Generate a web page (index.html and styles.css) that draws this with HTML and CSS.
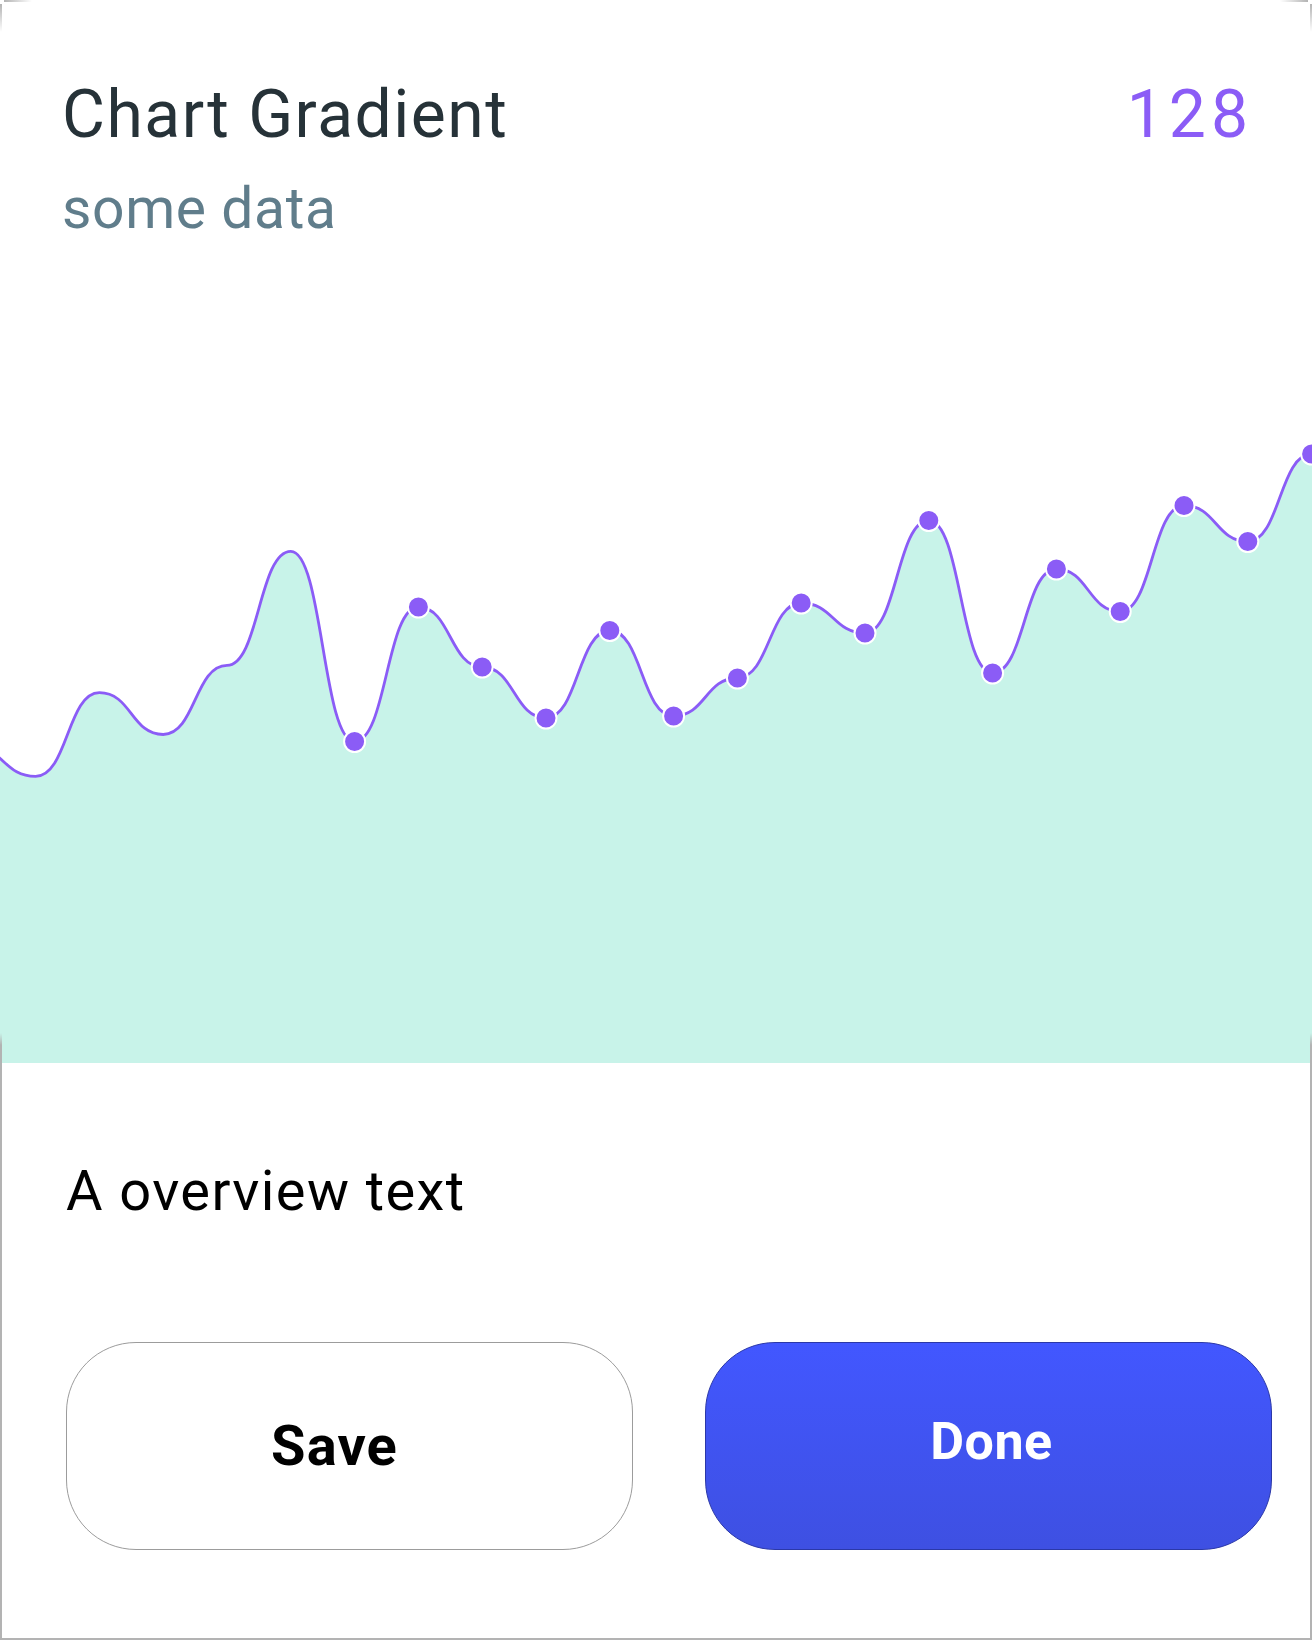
FILE: index.html
```html
<!DOCTYPE html>
<html lang="en">
<head>
<meta charset="utf-8">
<title>Chart Gradient</title>
<link rel="stylesheet" href="styles.css">
</head>
<body>
<div class="card">
  <div class="header">
    <div class="title">Chart Gradient</div>
    <div class="value">128</div>
  </div>
  <div class="subtitle">some data</div>
  <svg class="chart" viewBox="0 0 1312 820" width="1312" height="820" preserveAspectRatio="none">
    <path class="area" d="M-28.2,504 C3.7,504 3.7,533.4 35.6,533.4 C67.5,533.4 67.5,449.7 99.4,449.7 C131.3,449.7 131.3,491.5 163.2,491.5 C195.1,491.5 195.1,422.4 227,422.4 C258.9,422.4 258.9,308.4 290.8,308.4 C322.7,308.4 322.7,498.5 354.6,498.5 C386.5,498.5 386.5,364 418.4,364 C450.3,364 450.3,424 482.2,424 C514.1,424 514.1,475 546,475 C577.9,475 577.9,387.5 609.8,387.5 C641.7,387.5 641.7,473 673.6,473 C705.5,473 705.5,435 737.4,435 C769.3,435 769.3,360 801.2,360 C833.1,360 833.1,390 865,390 C896.9,390 896.9,277.5 928.8,277.5 C960.7,277.5 960.7,430 992.6,430 C1024.5,430 1024.5,326 1056.4,326 C1088.3,326 1088.3,368.5 1120.2,368.5 C1152.1,368.5 1152.1,262.5 1184,262.5 C1215.9,262.5 1215.9,298.5 1247.8,298.5 C1279.7,298.5 1279.7,211 1311.6,211 L1330,211 L1330,820 L-30,820 Z"/>
    <path class="line" d="M-28.2,504 C3.7,504 3.7,533.4 35.6,533.4 C67.5,533.4 67.5,449.7 99.4,449.7 C131.3,449.7 131.3,491.5 163.2,491.5 C195.1,491.5 195.1,422.4 227,422.4 C258.9,422.4 258.9,308.4 290.8,308.4 C322.7,308.4 322.7,498.5 354.6,498.5 C386.5,498.5 386.5,364 418.4,364 C450.3,364 450.3,424 482.2,424 C514.1,424 514.1,475 546,475 C577.9,475 577.9,387.5 609.8,387.5 C641.7,387.5 641.7,473 673.6,473 C705.5,473 705.5,435 737.4,435 C769.3,435 769.3,360 801.2,360 C833.1,360 833.1,390 865,390 C896.9,390 896.9,277.5 928.8,277.5 C960.7,277.5 960.7,430 992.6,430 C1024.5,430 1024.5,326 1056.4,326 C1088.3,326 1088.3,368.5 1120.2,368.5 C1152.1,368.5 1152.1,262.5 1184,262.5 C1215.9,262.5 1215.9,298.5 1247.8,298.5 C1279.7,298.5 1279.7,211 1311.6,211"/>
    <g class="dots">
      <circle cx="354.6" cy="498.5" r="10.5"/>
      <circle cx="418.4" cy="364" r="10.5"/>
      <circle cx="482.2" cy="424" r="10.5"/>
      <circle cx="546" cy="475" r="10.5"/>
      <circle cx="609.8" cy="387.5" r="10.5"/>
      <circle cx="673.6" cy="473" r="10.5"/>
      <circle cx="737.4" cy="435" r="10.5"/>
      <circle cx="801.2" cy="360" r="10.5"/>
      <circle cx="865" cy="390" r="10.5"/>
      <circle cx="928.8" cy="277.5" r="10.5"/>
      <circle cx="992.6" cy="430" r="10.5"/>
      <circle cx="1056.4" cy="326" r="10.5"/>
      <circle cx="1120.2" cy="368.5" r="10.5"/>
      <circle cx="1184" cy="262.5" r="10.5"/>
      <circle cx="1247.8" cy="298.5" r="10.5"/>
      <circle cx="1311.6" cy="211" r="10.5"/>
    </g>
  </svg>
  <div class="overview">A overview text</div>
  <div class="actions">
    <button class="btn btn-save" type="button">Save</button>
    <button class="btn btn-done" type="button">Done</button>
  </div>
</div>
</body>
</html>
```

FILE: styles.css
```css
* {
  box-sizing: border-box;
}

html,
body {
  margin: 0;
  padding: 0;
  background: #ffffff;
}

.card {
  position: relative;
  width: 1312px;
  height: 1640px;
  overflow: hidden;
  background: #ffffff;
  font-family: Roboto, "Liberation Sans", sans-serif;
}

.card::after {
  content: "";
  position: absolute;
  inset: 0;
  pointer-events: none;
  background:
    linear-gradient(to right, #b3b3b3, rgba(179, 179, 179, 0)) 4px 0 / 28px 2px no-repeat,
    linear-gradient(to bottom, #b3b3b3, rgba(179, 179, 179, 0)) 0 4px / 2px 28px no-repeat,
    linear-gradient(to left, #b3b3b3, rgba(179, 179, 179, 0)) right 4px top 0 / 28px 2px no-repeat,
    linear-gradient(to bottom, #b3b3b3, rgba(179, 179, 179, 0)) right 0 top 4px / 2px 28px no-repeat,
    linear-gradient(to bottom, rgba(179, 179, 179, 0), #b3b3b3 12px) 0 1033px / 2px 607px no-repeat,
    linear-gradient(to bottom, rgba(179, 179, 179, 0), #b3b3b3 12px) right 0 top 1033px / 2px 607px no-repeat,
    linear-gradient(#b3b3b3, #b3b3b3) 0 100% / 100% 2px no-repeat;
}

.header {
  display: flex;
  justify-content: space-between;
  align-items: baseline;
  padding: 75px 59px 0 62px;
}

.title {
  font-size: 66px;
  line-height: 80px;
  font-weight: 400;
  letter-spacing: 1.5px;
  color: #263238;
}

.value {
  font-size: 66px;
  line-height: 80px;
  font-weight: 400;
  letter-spacing: 5px;
  color: #8b5cf6;
}

.subtitle {
  margin-top: 20px;
  padding-left: 62px;
  font-size: 57px;
  line-height: 68px;
  letter-spacing: 0.6px;
  color: #607d8b;
}

.chart {
  display: block;
  width: 1312px;
  height: 820px;
  overflow: visible;
}

.area {
  fill: #c8f3e9;
  stroke: none;
}

.line {
  fill: none;
  stroke: #8b5cf6;
  stroke-width: 2.8;
}

.dots circle {
  fill: #8b5cf6;
  stroke: #ffffff;
  stroke-width: 2;
}

.overview {
  margin-top: 95px;
  padding-left: 66px;
  font-size: 56px;
  line-height: 66px;
  letter-spacing: 1.4px;
  color: #000000;
}

.actions {
  display: grid;
  grid-template-columns: 567px 567px;
  column-gap: 72px;
  margin-top: 118px;
  padding-left: 66px;
}

.btn {
  height: 208px;
  margin: 0;
  border-radius: 70px;
  font-family: Roboto, "Liberation Sans", sans-serif;
  font-weight: 700;
  cursor: pointer;
}

.btn-save {
  padding: 0 30px 0 0;
  border: 1px solid #9c9c9c;
  background: #ffffff;
  color: #000000;
  font-size: 56px;
  line-height: 66px;
  letter-spacing: 1.2px;
}

.btn-done {
  padding: 0 0 8px 6px;
  border: 1px solid #2b38a8;
  background: linear-gradient(to bottom, #4257ff, #3e50e2);
  color: #ffffff;
  font-size: 52px;
  line-height: 62px;
  letter-spacing: 0.5px;
}
```
